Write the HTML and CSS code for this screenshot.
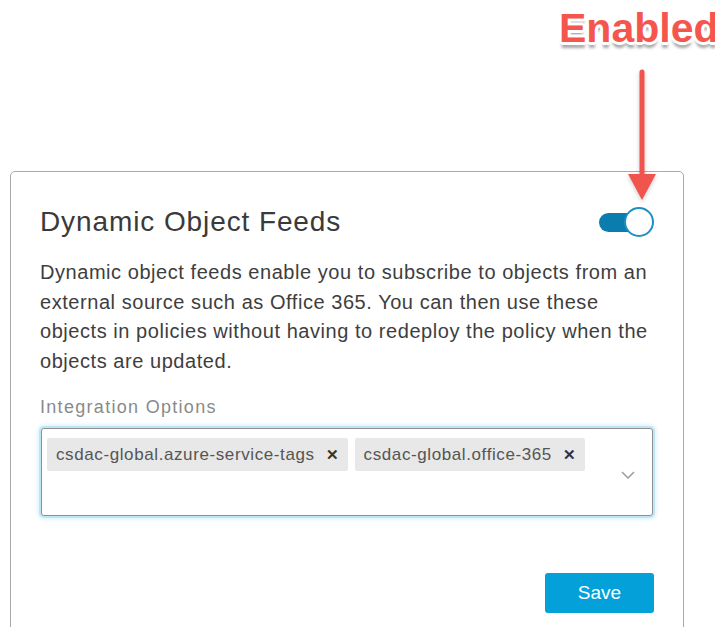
FILE: index.html
```html
<!DOCTYPE html>
<html lang="en">
<head>
<meta charset="utf-8">
<title>Dynamic Object Feeds</title>
<link rel="stylesheet" href="styles.css">
</head>
<body>
<div class="page">
  <section class="card">
    <header class="card-head">
      <h2 class="card-title">Dynamic Object Feeds</h2>
      <span class="toggle" role="switch" aria-checked="true"><span class="toggle-knob"></span></span>
    </header>
    <p class="card-desc">Dynamic object feeds enable you to subscribe to objects from an external source such as Office 365. You can then use these objects in policies without having to redeploy the policy when the objects are updated.</p>
    <label class="field-label">Integration Options</label>
    <div class="multi-select">
      <div class="tags">
        <span class="tag">csdac-global.azure-service-tags <span class="tag-x">&#x2715;</span></span>
        <span class="tag">csdac-global.office-365 <span class="tag-x">&#x2715;</span></span>
      </div>
      <svg class="chevron" width="14" height="8" viewBox="0 0 14 8"><path d="M1 1l6 6 6-6" fill="none" stroke="#a0a0a0" stroke-width="1.6"/></svg>
    </div>
    <div class="actions">
      <button class="btn-save" type="button">Save</button>
    </div>
  </section>

  <div class="callout">
    <span class="callout-text">Enabled</span>
    <svg class="callout-arrow" width="40" height="135" viewBox="0 0 40 135">
      <line x1="20" y1="3" x2="20" y2="112" stroke="#f0544d" stroke-width="5" stroke-linecap="round"/>
      <path d="M6 105 L34 105 L20 131 Z" fill="#f0544d"/>
    </svg>
  </div>
</div>
</body>
</html>
```

FILE: styles.css
```css
* { box-sizing: border-box; }

html, body {
  margin: 0;
  padding: 0;
  background: #fff;
}

body {
  font-family: "Liberation Sans", Arial, sans-serif;
  color: #3c3c3c;
  width: 715px;
  height: 627px;
  overflow: hidden;
}

.page {
  position: relative;
  height: 627px;
  padding: 171px 0 0 10px;
}

.card {
  width: 674px;
  height: 470px;
  border: 1.5px solid #a9a9a9;
  border-radius: 5px;
  padding: 34px 29px 0 29px;
  background: #fff;
}

.card-head {
  display: flex;
  justify-content: space-between;
  align-items: center;
  height: 32px;
}

.card-title {
  margin: 0;
  font-weight: 400;
  font-size: 28px;
  color: #3a3a3a;
  letter-spacing: 0.9px;
}

.toggle {
  position: relative;
  width: 55px;
  height: 30px;
  display: block;
}

.toggle::before {
  content: "";
  position: absolute;
  left: 0;
  top: 6px;
  width: 40px;
  height: 19px;
  border-radius: 10px;
  background: #0a7cad;
}

.toggle-knob {
  position: absolute;
  right: 0;
  top: 0;
  width: 30px;
  height: 30px;
  border-radius: 50%;
  background: #fff;
  border: 2px solid #1d8fc2;
}

.card-desc {
  margin: 20px 0 0;
  max-width: 613px;
  font-size: 20px;
  line-height: 29.6px;
  letter-spacing: 0.55px;
  color: #3e3e3e;
}

.field-label {
  display: block;
  margin-top: 21px;
  font-size: 18px;
  line-height: 21px;
  letter-spacing: 1.3px;
  color: #8a8a8a;
}

.multi-select {
  margin: 10px 0 0 1px;
  height: 88px;
  width: 612px;
  border: 1px solid #8f8f8f;
  border-radius: 3px;
  box-shadow: 0 0 0 2px #bfe6f7, 0 0 4px 3px #d7f0fb;
  padding: 9px 5px;
  display: flex;
  align-items: flex-start;
  justify-content: space-between;
}

.tags {
  display: flex;
  gap: 7px;
}

.tag {
  display: inline-flex;
  align-items: center;
  height: 33px;
  padding: 0 9px 0 9px;
  background: #e8e8e8;
  border-radius: 2px;
  font-size: 17px;
  letter-spacing: 0.6px;
  color: #555;
}

.tag-x {
  margin-left: 11px;
  font-size: 15px;
  font-weight: 700;
  letter-spacing: 0;
  color: #333;
}

.chevron {
  margin-top: 33px;
  margin-right: 12px;
}

.actions {
  display: flex;
  justify-content: flex-end;
  margin-top: 57px;
}

.btn-save {
  width: 109px;
  height: 40px;
  border: 0;
  border-radius: 3px;
  background: #04a0d9;
  color: #fff;
  font-family: inherit;
  font-size: 19px;
}

/* red callout over the switch */
.callout {
  position: absolute;
  left: 559px;
  top: 0;
  width: 170px;
}

.callout-text {
  display: block;
  font-size: 41px;
  font-weight: 700;
  color: #f4564e;
  line-height: 56px;
  white-space: nowrap;
  text-shadow:
    3px 0 0 #fff, -3px 0 0 #fff, 0 3px 0 #fff, 0 -3px 0 #fff,
    2px 2px 0 #fff, -2px 2px 0 #fff, 2px -2px 0 #fff, -2px -2px 0 #fff,
    0 6px 3px rgba(0,0,0,0.35);
}

.callout-arrow {
  position: absolute;
  left: 63px;
  top: 69px;
  filter: drop-shadow(0 2px 2px rgba(0,0,0,0.2));
}
```
